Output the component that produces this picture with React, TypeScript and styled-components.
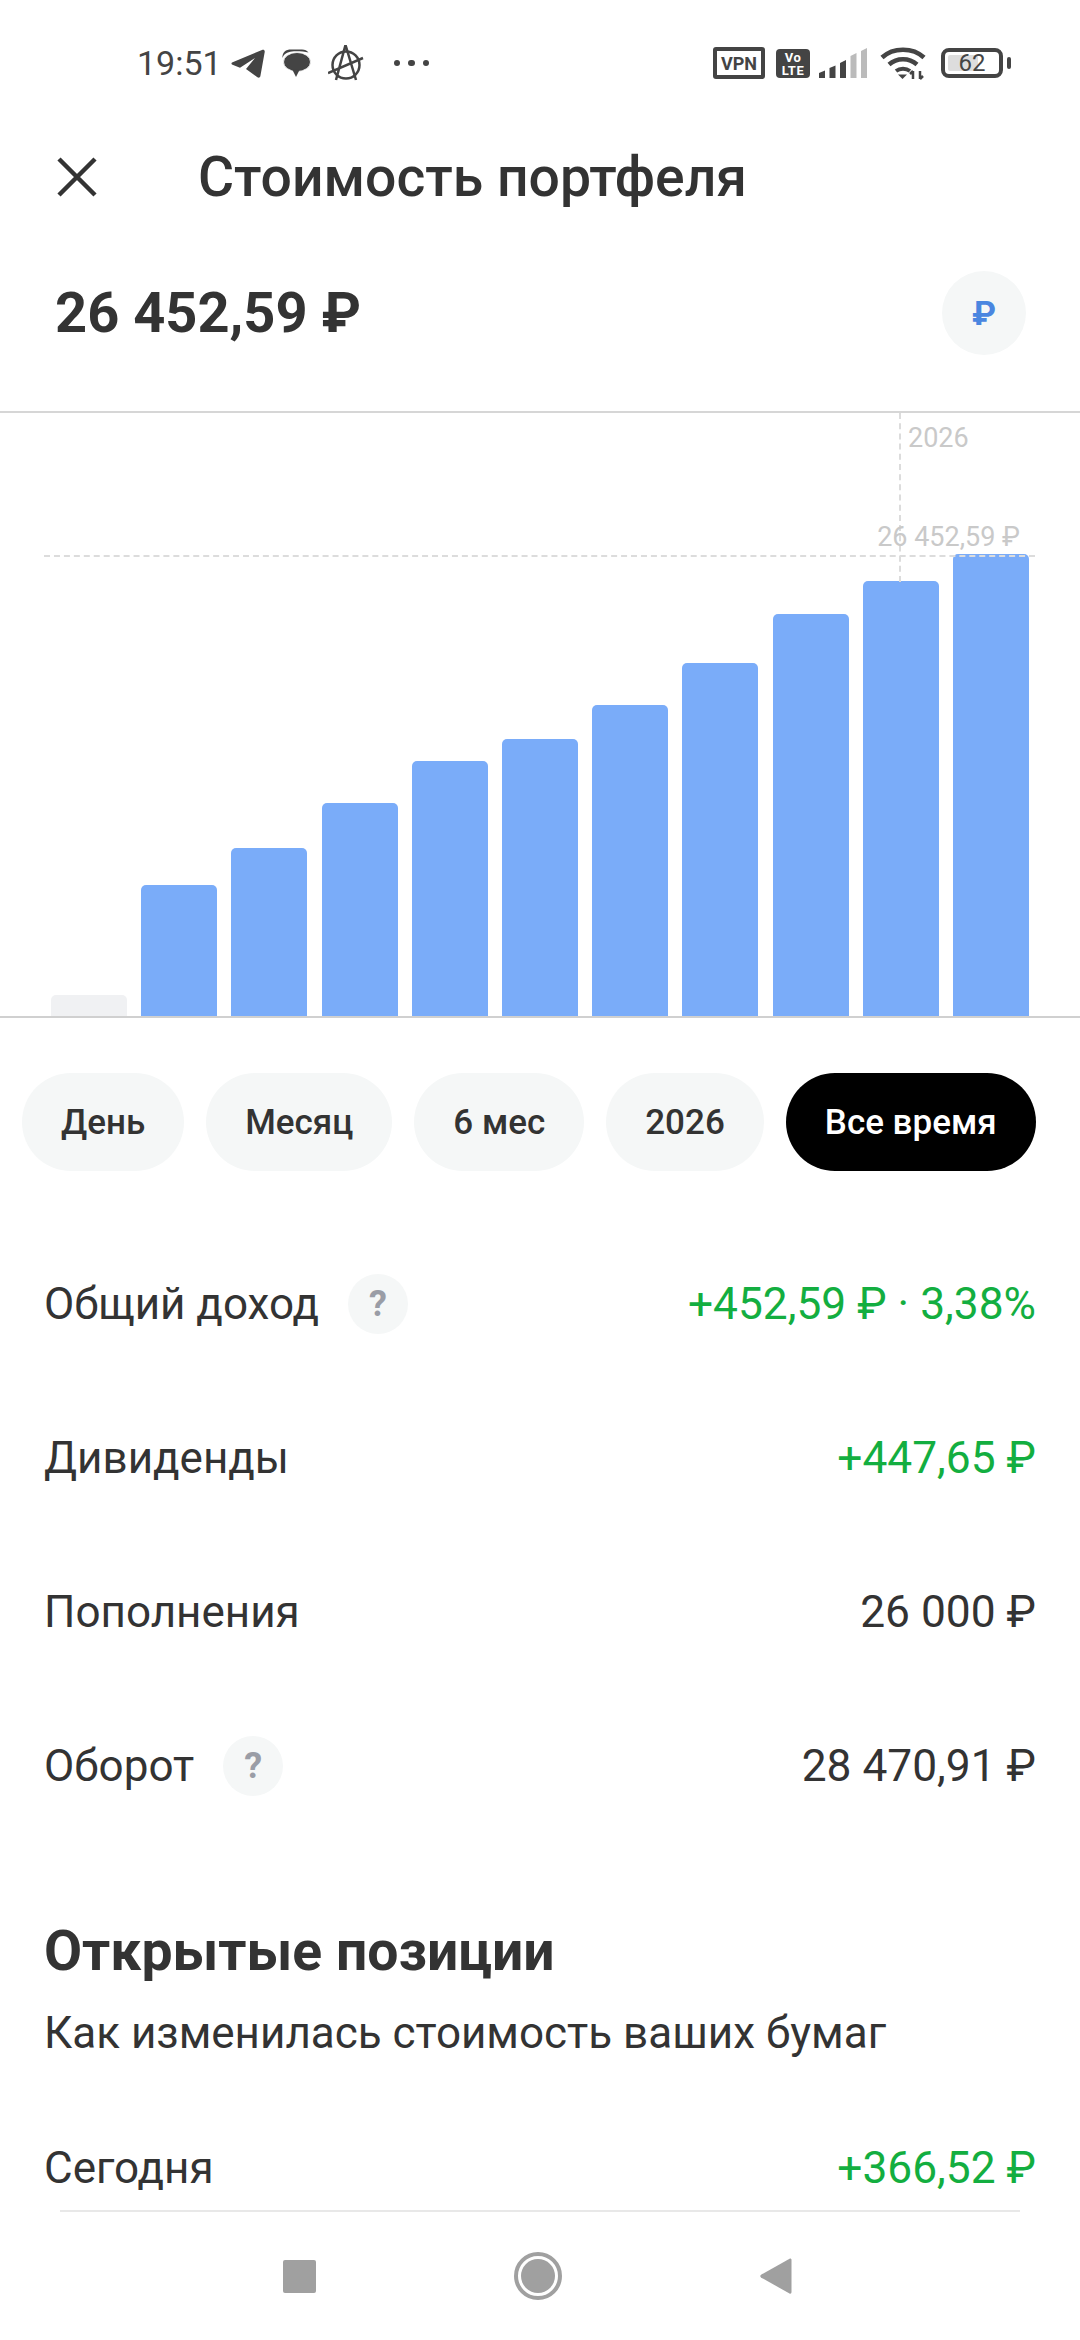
import styled, { createGlobalStyle } from "styled-components";

const GlobalStyle = createGlobalStyle`
  html, body {
    margin: 0;
    padding: 0;
    background: #fff;
  }
  * {
    box-sizing: border-box;
  }
`;

const bars = [
  { top: 996, empty: true },
  { top: 886 },
  { top: 849 },
  { top: 804 },
  { top: 762 },
  { top: 740 },
  { top: 706 },
  { top: 664 },
  { top: 615 },
  { top: 582 },
  { top: 555 },
];

const BASELINE = 1017;

const periods = ["День", "Месяц", "6 мес", "2026", "Все время"];

const TelegramIcon = () => (
  <svg width="34" height="29" viewBox="0 0 34 29">
    <path
      d="M1 13.500 31 1c1.600-.7 3 .2 2.700 1.900L29.400 27c-.3 1.600-1.700 2.100-3 1.200L15 20l9-11-15 9.800L1.500 15.800C.2 15.200.2 14 1 13.500Z"
      fill="#444"
    />
  </svg>
);

const MessageIcon = () => (
  <svg width="29" height="28" viewBox="0 0 29 28">
    <path d="M.5 9C0 3 4 .5 9 .5h11c3 0 5 1 6.500 3-4-1-12-1.500-16.500-1-5 .5-8 2.500-9.500 6.500Z" fill="#444" />
    <ellipse cx="15" cy="13" rx="13.500" ry="9.500" fill="#444" stroke="#fff" strokeWidth="0.800" />
    <path d="M10 20l4 8 3.500-7Z" fill="#444" />
  </svg>
);

const AnarchyIcon = () => (
  <svg width="36" height="36" viewBox="0 0 36 36" fill="none" stroke="#444" strokeWidth="2.500">
    <circle cx="18" cy="20" r="13.500" />
    <path d="M17.500 0 8 35M17.500 0 28 35M0 28 35 13" />
  </svg>
);

const WifiIcon = () => (
  <svg width="46" height="34" viewBox="0 0 46 34" fill="none" stroke="#444" strokeWidth="4.500">
    <path d="M2 11.500C13 1 33 1 44 11.500" />
    <path d="M9 18.500c8-7 20-7 28 0" />
    <path d="M16 25c4-3 10-3 14 0" strokeWidth="4" />
    <path d="M18 28.500h9L22.500 33Z" fill="#444" stroke="none" />
    <path d="M33 25v8M33 25l-3 3M40 33v-8M40 33l3-3" strokeWidth="2.500" />
  </svg>
);

const SignalIcon = () => (
  <svg width="48" height="30" viewBox="0 0 48 30">
    <path d="M0 25l6-2.500V30H0Z" fill="#444" />
    <path d="M10.500 20l6-2.500V30h-6Z" fill="#444" />
    <path d="M21 15l6-3v18h-6Z" fill="#444" />
    <path d="M31.500 8l6-3v25h-6Z" fill="#bbb" />
    <path d="M42 3l6-3v30h-6Z" fill="#bbb" />
  </svg>
);

const CloseIcon = () => (
  <svg width="40" height="40" viewBox="0 0 40 40" stroke="#333" strokeWidth="4.500" fill="none">
    <path d="M2 2 38 38M38 2 2 38" />
  </svg>
);

const HomeIcon = () => (
  <svg width="48" height="48" viewBox="0 0 48 48">
    <circle cx="24" cy="24" r="22" fill="none" stroke="#a0a0a0" strokeWidth="4" />
    <circle cx="24" cy="24" r="17" fill="#a0a0a0" />
  </svg>
);

const BackIcon = () => (
  <svg width="32" height="38" viewBox="0 0 32 38">
    <path d="M30 1.500c1 0 1.500.5 1.500 1.500v32c0 1.500-1 2-2 1.500L1 20.500c-1-.8-1-2 0-2.800Z" fill="#a0a0a0" />
  </svg>
);

export default function App() {
  return (
    <>
      <GlobalStyle />
      <Page>
        <StatusBar>
          <StatusLeft>
            <Clock>19:51</Clock>
            <TelegramIcon />
            <MessageIcon />
            <AnarchyIcon />
            <Dots>
              <i />
              <i />
              <i />
            </Dots>
          </StatusLeft>
          <StatusRight>
            <VpnBadge>VPN</VpnBadge>
            <VolteBadge>
              Vo
              <br />
              LTE
            </VolteBadge>
            <SignalWrap>
              <SignalIcon />
            </SignalWrap>
            <WifiWrap>
              <WifiIcon />
            </WifiWrap>
            <Battery>
              <BatteryFill />
              <BatteryText>62</BatteryText>
            </Battery>
          </StatusRight>
        </StatusBar>

        <Header>
          <CloseIcon />
          <Title>Стоимость портфеля</Title>
        </Header>

        <AmountRow>
          <Amount>26 452,59 ₽</Amount>
          <CurrencyButton>₽</CurrencyButton>
        </AmountRow>

        <Chart>
          {bars.map((bar, i) => (
            <Bar key={i} $empty={bar.empty} style={{ height: BASELINE - bar.top }} />
          ))}
          <HorizontalGuide />
          <VerticalGuide />
          <YearLabel>2026</YearLabel>
          <ValueLabel>26 452,59 ₽</ValueLabel>
        </Chart>

        <Periods>
          {periods.map((p) => (
            <Pill key={p} $active={p === "Все время"}>
              {p}
            </Pill>
          ))}
        </Periods>

        <Rows>
          <Row>
            <RowLabel>
              Общий доход
              <Help>?</Help>
            </RowLabel>
            <RowValue $positive>+452,59 ₽ · 3,38%</RowValue>
          </Row>
          <Row>
            <RowLabel>Дивиденды</RowLabel>
            <RowValue $positive>+447,65 ₽</RowValue>
          </Row>
          <Row>
            <RowLabel>Пополнения</RowLabel>
            <RowValue>26 000 ₽</RowValue>
          </Row>
          <Row>
            <RowLabel>
              Оборот
              <Help>?</Help>
            </RowLabel>
            <RowValue>28 470,91 ₽</RowValue>
          </Row>
        </Rows>

        <Section>
          <SectionTitle>Открытые позиции</SectionTitle>
          <SectionText>Как изменилась стоимость ваших бумаг</SectionText>
        </Section>

        <TodayRow>
          <RowLabel>Сегодня</RowLabel>
          <RowValue $positive>+366,52 ₽</RowValue>
        </TodayRow>

        <NavBar>
          <SquareKey />
          <HomeIcon />
          <BackIcon />
        </NavBar>
      </Page>
    </>
  );
}

const Page = styled.div`
  position: relative;
  width: 1080px;
  height: 2340px;
  overflow: hidden;
  background: #fff;
  color: #333;
  font-family: Roboto, "Noto Sans", sans-serif;
`;

const StatusBar = styled.div`
  height: 126px;
  padding: 0 77px 0 137px;
  display: flex;
  align-items: center;
  justify-content: space-between;
`;

const StatusLeft = styled.div`
  display: flex;
  align-items: center;
  gap: 17px;
`;

const Clock = styled.span`
  font-size: 34px;
  color: #444;
  margin-right: -8px;
`;

const Dots = styled.div`
  display: flex;
  gap: 8px;
  margin-left: 13px;

  i {
    width: 6.5px;
    height: 6.5px;
    border-radius: 50%;
    background: #444;
  }
`;

const StatusRight = styled.div`
  display: flex;
  align-items: center;
  gap: 11px;
`;

const SignalWrap = styled.div`
  display: flex;
  margin-left: -2px;
`;

const WifiWrap = styled.div`
  display: flex;
  margin-left: 2px;
`;

const VpnBadge = styled.div`
  width: 52px;
  height: 32px;
  border: 4px solid #444;
  border-radius: 3px;
  font-size: 18px;
  font-weight: 700;
  color: #444;
  display: flex;
  align-items: center;
  justify-content: center;
`;

const VolteBadge = styled.div`
  width: 34px;
  height: 29px;
  background: #444;
  border-radius: 4px;
  color: #fff;
  font-size: 13px;
  font-weight: 700;
  line-height: 13px;
  text-align: center;
  padding-top: 2px;
  letter-spacing: 0.5px;
`;

const Battery = styled.div`
  position: relative;
  width: 62px;
  height: 30px;
  margin-left: 4px;
  border: 4px solid #444;
  border-radius: 8px;
  padding: 3px;

  &::after {
    content: "";
    position: absolute;
    right: -12px;
    top: 5px;
    width: 4px;
    height: 12px;
    border-radius: 2px;
    background: #444;
  }
`;

const BatteryFill = styled.div`
  width: 62%;
  height: 100%;
  border-radius: 2px;
  background: #ddd;
`;

const BatteryText = styled.span`
  position: absolute;
  inset: 0;
  font-size: 24px;
  line-height: 22px;
  text-align: center;
  color: #444;
`;

const Header = styled.div`
  height: 102px;
  padding-left: 57px;
  display: flex;
  align-items: center;
  gap: 101px;
`;

const Title = styled.div`
  font-size: 55.3px;
  font-weight: 500;
  white-space: nowrap;
`;

const AmountRow = styled.div`
  height: 183px;
  padding: 0 54px 13px 55px;
  display: flex;
  align-items: center;
  justify-content: space-between;
`;

const Amount = styled.div`
  font-size: 56px;
  font-weight: 700;
`;

const CurrencyButton = styled.div`
  width: 84px;
  height: 84px;
  border-radius: 50%;
  background: #f5f7f7;
  color: #4a86e0;
  font-size: 34px;
  font-weight: 700;
  display: flex;
  align-items: center;
  justify-content: center;
`;

const Chart = styled.div`
  position: relative;
  height: 607px;
  padding: 0 51px;
  border-top: 2px solid #d6d6d6;
  border-bottom: 2px solid #d0d0d0;
  display: flex;
  align-items: flex-end;
  justify-content: space-between;
`;

const Bar = styled.div<{ $empty?: boolean }>`
  width: 76px;
  border-radius: 5px 5px 0 0;
  background: ${({ $empty }) => ($empty ? "#f0f1f3" : "#7aacf9")};
`;

const HorizontalGuide = styled.div`
  position: absolute;
  left: 44px;
  right: 45px;
  top: 142px;
  border-top: 2px dashed #dcdcdc;
`;

const VerticalGuide = styled.div`
  position: absolute;
  left: 899px;
  top: 0;
  height: 169px;
  border-left: 2px dashed #dcdcdc;
`;

const YearLabel = styled.span`
  position: absolute;
  left: 908px;
  top: 8px;
  font-size: 27px;
  line-height: 34px;
  color: #c9c9c9;
`;

const ValueLabel = styled.span`
  position: absolute;
  right: 60px;
  top: 107px;
  font-size: 27px;
  line-height: 34px;
  color: #c9c9c9;
  white-space: nowrap;
`;

const Periods = styled.div`
  margin-top: 55px;
  padding: 0 22px;
  display: flex;
  gap: 22px;
`;

const Pill = styled.div<{ $active?: boolean }>`
  height: 98px;
  padding: 0 39px;
  border-radius: 49px;
  background: ${({ $active }) => ($active ? "#000" : "#f5f7f7")};
  color: ${({ $active }) => ($active ? "#fff" : "#333")};
  font-size: 35px;
  font-weight: 500;
  white-space: nowrap;
  display: flex;
  align-items: center;
`;

const Rows = styled.div`
  margin-top: 56px;
`;

const Row = styled.div`
  height: 154px;
  padding: 0 44px;
  display: flex;
  align-items: center;
  justify-content: space-between;
`;

const RowLabel = styled.div`
  display: flex;
  align-items: center;
  gap: 29px;
  font-size: 44px;
`;

const RowValue = styled.div<{ $positive?: boolean }>`
  font-size: 44.3px;
  color: ${({ $positive }) => ($positive ? "#13ae40" : "#333")};
`;

const Help = styled.span`
  width: 60px;
  height: 60px;
  border-radius: 50%;
  background: #f5f7f7;
  color: #9a9da6;
  font-size: 36px;
  font-weight: 700;
  display: flex;
  align-items: center;
  justify-content: center;
`;

const Section = styled.div`
  margin-top: 78px;
  padding: 0 44px;
`;

const SectionTitle = styled.div`
  font-size: 55.3px;
  font-weight: 700;
  line-height: 62px;
`;

const SectionText = styled.div`
  margin-top: 25px;
  font-size: 44px;
  line-height: 50px;
`;

const TodayRow = styled.div`
  margin-top: 84px;
  padding: 0 44px;
  display: flex;
  align-items: center;
  justify-content: space-between;
`;

const NavBar = styled.div`
  position: absolute;
  left: 60px;
  right: 60px;
  bottom: 0;
  height: 130px;
  padding: 0 0 0 223px;
  border-top: 2px solid #e8e8e8;
  background: #fff;
  display: flex;
  align-items: center;
  gap: 198px;
`;

const SquareKey = styled.div`
  width: 33px;
  height: 33px;
  border-radius: 2px;
  background: #a0a0a0;
`;
